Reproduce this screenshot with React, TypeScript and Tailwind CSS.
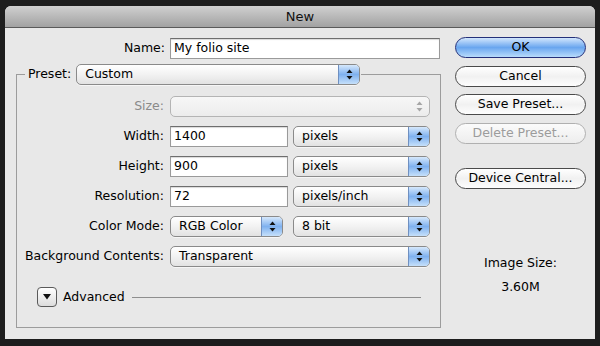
import React from 'react';

const font = "font-['DejaVu_Sans',sans-serif] text-[12.5px] leading-none";

const Arrows: React.FC<{ color?: string }> = ({ color = '#111' }) => (
  <svg width="7" height="11" viewBox="0 0 7 11">
    <path d="M3.5 0.5 L6.5 4 L0.5 4 Z" fill={color} />
    <path d="M0.5 7 L6.5 7 L3.5 10.5 Z" fill={color} />
  </svg>
);

const Popup: React.FC<{ value?: string; className?: string; disabled?: boolean }> = ({
  value = '',
  className = '',
  disabled = false,
}) => (
  <div
    className={`flex h-[21px] items-stretch overflow-hidden rounded-[5px] border ${
      disabled ? 'border-[#b4b4b4] bg-gradient-to-b from-[#f7f7f7] to-[#ececec]' : 'border-[#8a8a8a] bg-gradient-to-b from-white via-[#f2f2f2] to-[#e2e2e2] shadow-[0_1px_0_rgba(255,255,255,0.6)]'
    } ${className}`}
  >
    <span className="flex flex-1 items-center pl-[8px] text-black">{value}</span>
    {disabled ? (
      <div className="flex w-[20px] items-center justify-center">
        <Arrows color="#a6a6a6" />
      </div>
    ) : (
      <div className="flex w-[21px] items-center justify-center border-l border-[#6f8fc0] bg-gradient-to-b from-[#d6e8fb] via-[#7fb1ef] to-[#c6e0fa]">
        <Arrows />
      </div>
    )}
  </div>
);

const Field: React.FC<{ value: string; className?: string }> = ({ value, className = '' }) => (
  <div
    className={`flex h-[21px] items-center border border-[#9a9a9a] border-t-[#6e6e6e] bg-white pl-[3px] text-black shadow-[inset_0_1px_1px_rgba(0,0,0,0.15)] ${className}`}
  >
    {value}
  </div>
);

const Button: React.FC<{ label: string; primary?: boolean; disabled?: boolean; className?: string }> = ({
  label,
  primary,
  disabled,
  className = '',
}) => (
  <div
    className={`flex h-[21px] w-[131px] items-center justify-center rounded-full border ${
      primary
        ? 'border-[#24307a] bg-gradient-to-b from-[#d2e6fc] via-[#69a6ef] to-[#b8dbfb] text-black'
        : disabled
        ? 'border-[#b0b0b0] bg-gradient-to-b from-[#fbfbfb] to-[#ededed] text-[#9c9c9c]'
        : 'border-[#4a4a4a] bg-gradient-to-b from-white via-[#f1f1f1] to-[#fdfdfd] text-black'
    } ${className}`}
  >
    {label}
  </div>
);

const Row: React.FC<{ label: string; dim?: boolean; children: React.ReactNode }> = ({ label, dim, children }) => (
  <div className="flex h-[21px] items-center">
    <div className={`w-[148px] pr-[1px] text-right ${dim ? 'text-[#8a8a8a]' : 'text-black'}`}>{label}</div>
    <div className="ml-[5px] flex gap-[5px]">{children}</div>
  </div>
);

export default function App() {
  return (
    <div className={`h-[346px] w-[600px] bg-[#1d1d1d] px-[5px] pt-[6px] ${font}`}>
      <div className="flex h-[333px] w-[590px] flex-col overflow-hidden rounded-t-[6px] bg-[#e8e8e8]">
        <div className="flex h-[22px] shrink-0 items-center justify-center border-b border-[#5a5a5a] bg-gradient-to-b from-[#d0d0d0] to-[#a2a2a2] text-[13px] text-[#111]">
          New
        </div>

        <div className="flex flex-1">
          {/* left form */}
          <div className="w-[440px] pt-[10px]">
            <div className="flex h-[21px] items-center">
              <div className="w-[160px] text-right text-black">Name:</div>
              <Field value="My folio site" className="ml-[5px] w-[270px]" />
            </div>

            <fieldset className="ml-[11px] mt-[5px] w-[425px] border border-[#9c9c9c] pb-[20px]">
              <legend className="ml-[8px] flex items-center pl-[3px] pr-[1px]">
                <span className="text-black">Preset:</span>
                <Popup value="Custom" className="ml-[5px] w-[284px]" />
              </legend>

              <div className="flex flex-col gap-[9px] pt-[11px]">
                <Row label="Size:" dim>
                  <Popup disabled className="w-[260px]" />
                </Row>
                <Row label="Width:">
                  <Field value="1400" className="w-[118px]" />
                  <Popup value="pixels" className="w-[137px]" />
                </Row>
                <Row label="Height:">
                  <Field value="900" className="w-[118px]" />
                  <Popup value="pixels" className="w-[137px]" />
                </Row>
                <Row label="Resolution:">
                  <Field value="72" className="w-[118px]" />
                  <Popup value="pixels/inch" className="w-[137px]" />
                </Row>
                <Row label="Color Mode:">
                  <Popup value="RGB Color" className="w-[113px]" />
                  <Popup value="8 bit" className="ml-[5px] w-[137px]" />
                </Row>
                <Row label="Background Contents:">
                  <Popup value="Transparent" className="w-[260px]" />
                </Row>
              </div>

              <div className="ml-[20px] mt-[20px] flex h-[20px] items-center">
                <div className="flex h-[20px] w-[20px] items-center justify-center rounded-[4px] border border-[#5a5a5a] bg-gradient-to-b from-white to-[#dcdcdc]">
                  <svg width="8" height="6" viewBox="0 0 8 6">
                    <path d="M0 0 L8 0 L4 5.5 Z" fill="#111" />
                  </svg>
                </div>
                <span className="ml-[6px] text-black">Advanced</span>
                <div className="ml-[7px] mr-[19px] h-px flex-1 bg-[#8e8e8e]" />
              </div>
            </fieldset>
          </div>

          {/* right buttons */}
          <div className="ml-[10px] flex flex-col pt-[9px]">
            <Button label="OK" primary />
            <Button label="Cancel" className="mt-[8px]" />
            <Button label="Save Preset..." className="mt-[7px]" />
            <Button label="Delete Preset..." disabled className="mt-[8px]" />
            <Button label="Device Central..." className="mt-[24px]" />
            <div className="mt-[68px] text-center text-black">Image Size:</div>
            <div className="mt-[11px] text-center text-black">3.60M</div>
          </div>
        </div>
      </div>
    </div>
  );
}
